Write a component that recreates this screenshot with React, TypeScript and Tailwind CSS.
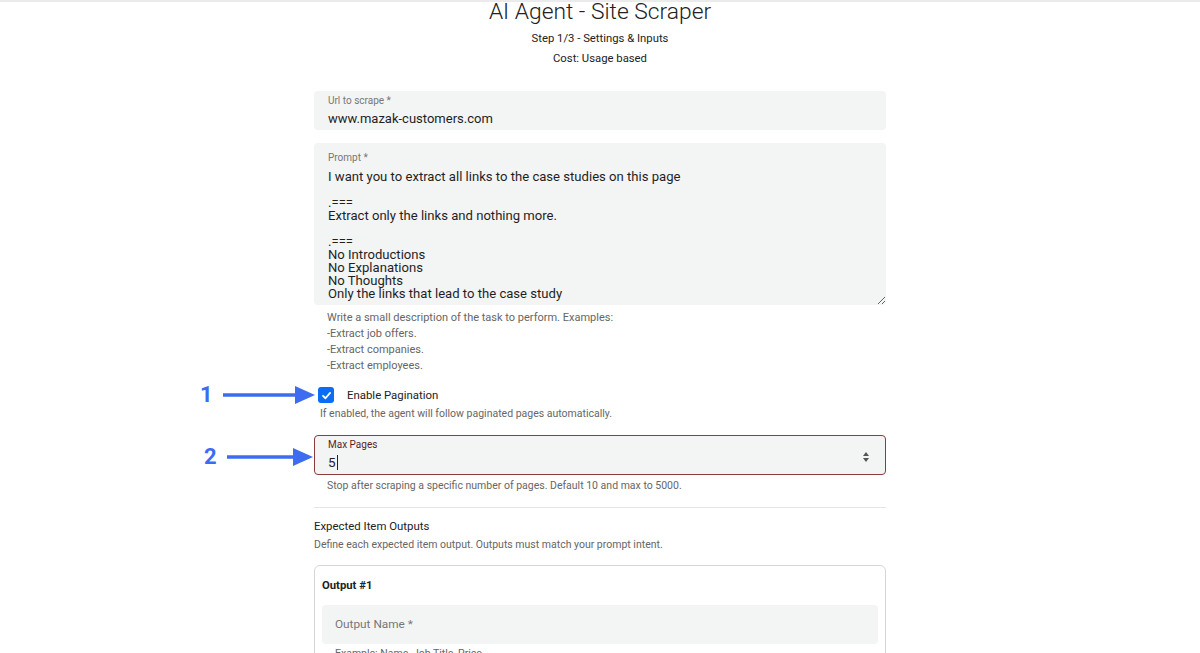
import React from "react";

const prompt = `I want you to extract all links to the case studies on this page

.===
Extract only the links and nothing more.

.===
No Introductions
No Explanations
No Thoughts
Only the links that lead to the case study`;

function Arrow({ label, width }: { label: string; width: number }) {
  return (
    <div className="flex items-center gap-[10px]">
      <span className="text-[22px] font-bold leading-none text-[#3d6cf0]">{label}</span>
      <svg width={width} height="22" viewBox={`0 0 ${width} 22`}>
        <line x1="0" y1="11" x2={width - 16} y2="11" stroke="#3d6cf0" strokeWidth="3.5" strokeLinecap="round" />
        <polygon points={`${width - 20},2 ${width},11 ${width - 20},20`} fill="#3d6cf0" />
      </svg>
    </div>
  );
}

export default function App() {
  return (
    <div className="min-h-[653px] bg-white font-['Roboto',sans-serif] text-[#1f1f1f]">
      <div className="h-[2px] bg-[#ebebeb]" />
      <div className="flex flex-col items-center">
        <h1 className="mt-[-4px] text-[22.8px] font-light leading-[28px] text-[#222]">AI Agent - Site Scraper</h1>
        <p className="mt-[5px] text-[11.3px] leading-[16px] text-[#222]">Step 1/3 - Settings &amp; Inputs</p>
        <p className="mt-[4px] text-[11.3px] leading-[16px] text-[#222]">Cost: Usage based</p>
      </div>

      <div className="relative mx-auto mt-[24px] w-[572px]">
        <div className="h-[39px] rounded-[4px] bg-[#f3f4f4] px-[14px] pt-[4px]">
          <div className="text-[10px] leading-[12px] text-[#777]">Url to scrape *</div>
          <div className="mt-[3px] text-[13px] leading-[17px]">www.mazak-customers.com</div>
        </div>

        <div className="relative mt-[13px]">
          <div className="absolute left-[14px] top-[9px] text-[10px] leading-[12px] text-[#777]">Prompt *</div>
          <textarea
            readOnly
            value={prompt}
            className="block h-[162px] w-full resize-y rounded-[4px] bg-[#f3f4f4] px-[14px] pt-[27px] text-[13.1px] leading-[13px] text-[#1f1f1f] outline-none"
          />
        </div>

        <div className="mt-[5px] px-[13px] text-[11px] leading-[16px] text-[#666]">
          <div>Write a small description of the task to perform. Examples:</div>
          <div>-Extract job offers.</div>
          <div>-Extract companies.</div>
          <div>-Extract employees.</div>
        </div>

        <div className="mt-[13px] flex items-center pl-[4px]">
          <span className="flex h-[16px] w-[16px] items-center justify-center rounded-[3px] bg-[#0b6cf4]">
            <svg width="11" height="11" viewBox="0 0 12 12">
              <path d="M2.2 6.3 L4.9 9 L9.9 3.2" fill="none" stroke="white" strokeWidth="2" strokeLinecap="round" strokeLinejoin="round" />
            </svg>
          </span>
          <span className="ml-[13px] text-[11.4px] leading-[16px] text-[#222]">Enable Pagination</span>
        </div>
        <div className="mt-[3px] pl-[6px] text-[10.5px] leading-[16px] text-[#666]">
          If enabled, the agent will follow paginated pages automatically.
        </div>

        <div className="mt-[13px] flex h-[40px] items-center rounded-[4px] border border-[#8a3b40] bg-[#f3f4f4] pl-[13px] pr-[16px]">
          <div className="flex-1">
            <div className="text-[10px] leading-[12px] text-[#5a1f24]">Max Pages</div>
            <div className="mt-[3px] flex items-center text-[13.5px] leading-[17px]">
              5<span className="ml-[1px] inline-block h-[15px] w-[1px] bg-[#222]" />
            </div>
          </div>
          <div className="mt-[4px] flex flex-col items-center gap-[2px]">
            <svg width="6" height="4" viewBox="0 0 6 4"><polygon points="3,0 6,4 0,4" fill="#555" /></svg>
            <svg width="6" height="4" viewBox="0 0 6 4"><polygon points="0,0 6,0 3,4" fill="#555" /></svg>
          </div>
        </div>

        <div className="mt-[3px] px-[13px] text-[10.5px] leading-[16px] text-[#666]">
          Stop after scraping a specific number of pages. Default 10 and max to 5000.
        </div>

        <div className="mt-[13px] h-[1px] bg-[#e5e5e5]" />

        <div className="mt-[10px] text-[11.4px] leading-[16px] text-[#222]">Expected Item Outputs</div>
        <div className="mt-[3px] text-[10.5px] leading-[16px] text-[#666]">
          Define each expected item output. Outputs must match your prompt intent.
        </div>

        <div className="mt-[12px] rounded-[6px] border border-[#d6d6d6] px-[7px] pt-[12px] pb-[10px]">
          <div className="text-[11.3px] font-bold leading-[16px] text-[#222]">Output #1</div>
          <div className="mt-[11px] flex h-[39px] items-center rounded-[4px] bg-[#f3f4f4] px-[13px] text-[11.8px] text-[#777]">
            Output Name *
          </div>
          <div className="mt-[2px] px-[13px] text-[10.5px] leading-[16px] text-[#666]">
            Example: Name, Job Title, Price
          </div>
        </div>

        <div className="absolute left-[-114px] top-[293px]">
          <Arrow label="1" width={92} />
        </div>
        <div className="absolute left-[-110px] top-[355px]">
          <Arrow label="2" width={86} />
        </div>
      </div>
    </div>
  );
}
